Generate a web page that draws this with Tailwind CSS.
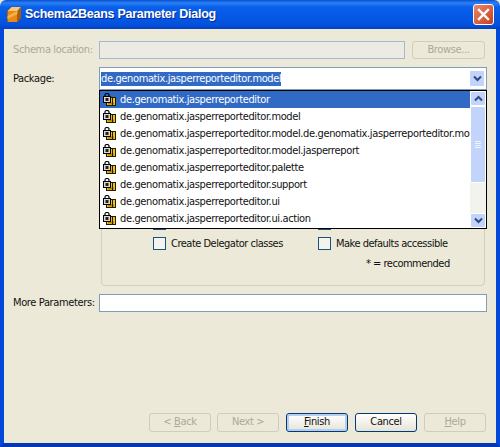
<!DOCTYPE html>
<html lang="en">
<head>
<meta charset="UTF-8">
<title>Schema2Beans Parameter Dialog</title>
<script src="https://cdn.jsdelivr.net/npm/@tailwindcss/browser@4"></script>
</head>
<body class="bg-[#ece9d8] font-['DejaVu_Sans',sans-serif] [font-stretch:condensed] tracking-[-0.37px] text-[11px] text-[#111] overflow-hidden">
<svg class="hidden">
  <symbol id="pkg" viewBox="0 0 13 13">
    <rect x="3.500" y="4.500" width="9" height="8" fill="#f2c010" stroke="#241a00"/>
    <rect x="5" y="9.500" width="6" height="2" fill="#b88400"/>
    <path d="M9.500 5v7.500" stroke="#241a00"/>
    <rect x="0.500" y="3.500" width="7" height="6" fill="#d8d8d8" stroke="#000"/>
    <path d="M2 3.500V2q0-1.500 2-1.500t2 1.500v1.500" fill="none" stroke="#000" stroke-width="1.200"/>
    <rect x="2.500" y="5" width="3" height="3" fill="#222"/>
  </symbol>
</svg>
<div class="flex flex-col w-[500px] h-[447px]">
  <!-- title bar -->
  <div class="h-[29px] flex items-center pl-[6px] pr-[6px] bg-[linear-gradient(180deg,#0a50d0_0px,#2a80f4_3px,#0a60ea_7px,#0458e4_18px,#0450dc_25px,#0340c0_29px)] rounded-t-[6px]">
    <svg width="16" height="17" viewBox="0 0 16 17" class="shrink-0">
      <path d="M1 5l4-4h10v11l-4 4H1z" fill="#6a3606"/>
      <rect x="1.500" y="5" width="10" height="11" fill="#e88a18"/>
      <path d="M1.500 5l4-4h9.500l-3.500 4z" fill="#f8c878"/>
      <path d="M11.500 5l3.500-4v11l-3.500 4z" fill="#a85a10"/>
      <path d="M1.500 10l10-5v3l-10 5z" fill="#f5b048"/>
    </svg>
    <span class="ml-[3px] text-white font-['Liberation_Sans',sans-serif] font-bold text-[12.500px] tracking-[-0.27px] [text-shadow:1px_1px_0_#0a2a90]">Schema2Beans Parameter Dialog</span>
    <div class="ml-auto w-[21px] h-[21px] rounded-[3px] border border-white bg-gradient-to-br from-[#e8866a] to-[#c83c18] flex items-center justify-center">
      <svg width="13" height="13" viewBox="0 0 13 13"><path d="M2 2l9 9M11 2l-9 9" stroke="#fff" stroke-width="2.400" stroke-linecap="square"/></svg>
    </div>
  </div>

  <!-- window frame -->
  <div class="flex-1 border-x-4 border-b-4 border-x-[#0348d8] border-b-[#0338b0] px-[9px] pt-[12px] flex flex-col min-h-0">
    <div class="flex items-center h-[18px]">
      <label class="w-[86px] pt-[1px] whitespace-nowrap text-[#aca899]">Schema location:</label>
      <div class="w-[306px] h-full bg-[#ebebe4] border border-[#a5b8cf]"></div>
      <div class="ml-[7px] w-[73px] h-full rounded-[3px] border border-[#d0cdbc] flex items-center justify-center text-[#aca899]">Browse...</div>
    </div>

    <div class="relative">
      <div class="flex items-center h-[23px] mt-[8px]">
        <label class="w-[86px] pt-[2px]">Package:</label>
        <div class="flex-1 h-full bg-white border border-[#7f9db9] flex items-center pl-[1px] pr-[1px]">
          <span class="bg-[#316ac5] text-white h-[14px] mt-[1px] leading-[14px] whitespace-nowrap">de.genomatix.jasperreporteditor.model</span>
          <div class="ml-auto w-[16px] h-[17px] rounded-[2px] bg-[#c3d4fb] border border-white flex items-center justify-center">
            <svg width="9" height="7" viewBox="0 0 9 7"><path d="M1 1.500l3.500 3.500 3.500-3.500" fill="none" stroke="#2a4a80" stroke-width="2"/></svg>
          </div>
        </div>
      </div>

      <!-- package dropdown -->
      <div class="absolute left-[86px] top-[31px] w-[388px] h-[139px] bg-white border border-black flex z-10">
        <ul class="flex-1 min-w-0 overflow-hidden">
          <li class="h-[17px] flex items-center pt-[2px] pl-[3px] whitespace-nowrap bg-[#316ac5] text-white"><svg class="w-[13px] h-[13px] mt-[-2px] mr-[4px] shrink-0"><use href="#pkg"/></svg>de.genomatix.jasperreporteditor</li>
          <li class="h-[17px] flex items-center pt-[2px] pl-[3px] whitespace-nowrap"><svg class="w-[13px] h-[13px] mt-[-2px] mr-[4px] shrink-0"><use href="#pkg"/></svg>de.genomatix.jasperreporteditor.model</li>
          <li class="h-[17px] flex items-center pt-[2px] pl-[3px] whitespace-nowrap"><svg class="w-[13px] h-[13px] mt-[-2px] mr-[4px] shrink-0"><use href="#pkg"/></svg>de.genomatix.jasperreporteditor.model.de.genomatix.jasperreporteditor.model</li>
          <li class="h-[17px] flex items-center pt-[2px] pl-[3px] whitespace-nowrap"><svg class="w-[13px] h-[13px] mt-[-2px] mr-[4px] shrink-0"><use href="#pkg"/></svg>de.genomatix.jasperreporteditor.model.jasperreport</li>
          <li class="h-[17px] flex items-center pt-[2px] pl-[3px] whitespace-nowrap"><svg class="w-[13px] h-[13px] mt-[-2px] mr-[4px] shrink-0"><use href="#pkg"/></svg>de.genomatix.jasperreporteditor.palette</li>
          <li class="h-[17px] flex items-center pt-[2px] pl-[3px] whitespace-nowrap"><svg class="w-[13px] h-[13px] mt-[-2px] mr-[4px] shrink-0"><use href="#pkg"/></svg>de.genomatix.jasperreporteditor.support</li>
          <li class="h-[17px] flex items-center pt-[2px] pl-[3px] whitespace-nowrap"><svg class="w-[13px] h-[13px] mt-[-2px] mr-[4px] shrink-0"><use href="#pkg"/></svg>de.genomatix.jasperreporteditor.ui</li>
          <li class="h-[17px] flex items-center pt-[2px] pl-[3px] whitespace-nowrap"><svg class="w-[13px] h-[13px] mt-[-2px] mr-[4px] shrink-0"><use href="#pkg"/></svg>de.genomatix.jasperreporteditor.ui.action</li>
        </ul>
        <div class="w-[16px] shrink-0 bg-[#f3f3ee] flex flex-col">
          <div class="h-[15px] bg-[#c3d4fb] border border-white rounded-[2px] flex items-center justify-center">
            <svg width="9" height="7" viewBox="0 0 9 7"><path d="M1 5.500l3.500-3.500 3.500 3.500" fill="none" stroke="#2a4a80" stroke-width="2"/></svg>
          </div>
          <div class="h-[77px] bg-[#c3d4fb] border border-white rounded-[2px] flex flex-col items-center justify-center gap-[1px]">
            <div class="w-[6px] h-[1px] bg-[#eef3ff]"></div><div class="w-[6px] h-[1px] bg-[#eef3ff]"></div><div class="w-[6px] h-[1px] bg-[#eef3ff]"></div><div class="w-[6px] h-[1px] bg-[#eef3ff]"></div>
          </div>
          <div class="h-[15px] mt-auto bg-[#c3d4fb] border border-white rounded-[2px] flex items-center justify-center">
            <svg width="9" height="7" viewBox="0 0 9 7"><path d="M1 1.500l3.500 3.500 3.500-3.500" fill="none" stroke="#2a4a80" stroke-width="2"/></svg>
          </div>
        </div>
      </div>

      <!-- options group, mostly behind the dropdown -->
      <div class="ml-[88px] mr-[2px] mt-[8px] h-[188px] border border-[#d0d0bf] rounded-[4px] pl-[51px] flex flex-col justify-end pb-[15px] tracking-[-0.5px]">
        <div class="flex h-[13px] mb-[7px]">
          <div class="w-[165px]"><div class="w-[13px] h-[13px] bg-white border border-[#1c5180]"></div></div>
          <div class="w-[13px] h-[13px] bg-white border border-[#1c5180]"></div>
        </div>
        <div class="flex h-[13px]">
          <label class="w-[165px] flex items-center gap-[5px]"><span class="w-[13px] h-[13px] bg-[#f4f4ee] border border-[#1c5180]"></span><span class="pt-[1px]">Create Delegator classes</span></label>
          <label class="flex items-center gap-[5px]"><span class="w-[13px] h-[13px] bg-[#f4f4ee] border border-[#1c5180]"></span><span class="pt-[1px]">Make defaults accessible</span></label>
        </div>
        <div class="mt-[6px] h-[14px] leading-[16px] pl-[213px]">* = recommended</div>
      </div>
    </div>

    <div class="flex items-center h-[18px] mt-[8px]">
      <label class="w-[86px] pt-[1px] whitespace-nowrap">More Parameters:</label>
      <div class="flex-1 h-full bg-white border border-[#7f9db9]"></div>
    </div>

    <div class="mt-auto mb-[11px] mr-[1px] flex justify-end gap-[7px] h-[19px]">
      <button class="w-[62px] mr-[-1px] rounded-[3px] border border-[#d0cdbc] text-[#aca899]">&lt; <u>B</u>ack</button>
      <button class="w-[62px] rounded-[3px] border border-[#d0cdbc] text-[#aca899]">Next &gt;</button>
      <button class="w-[62px] rounded-[3px] border border-[#003c74] bg-gradient-to-b from-white to-[#e6e4d8] shadow-[inset_0_0_0_2px_#b8cdf0]"><u>F</u>inish</button>
      <button class="w-[62px] rounded-[3px] border border-[#003c74] bg-gradient-to-b from-white to-[#e6e4d8]">Cancel</button>
      <button class="w-[62px] rounded-[3px] border border-[#d0cdbc] text-[#aca899]"><u>H</u>elp</button>
    </div>
  </div>
</div>
</body>
</html>
